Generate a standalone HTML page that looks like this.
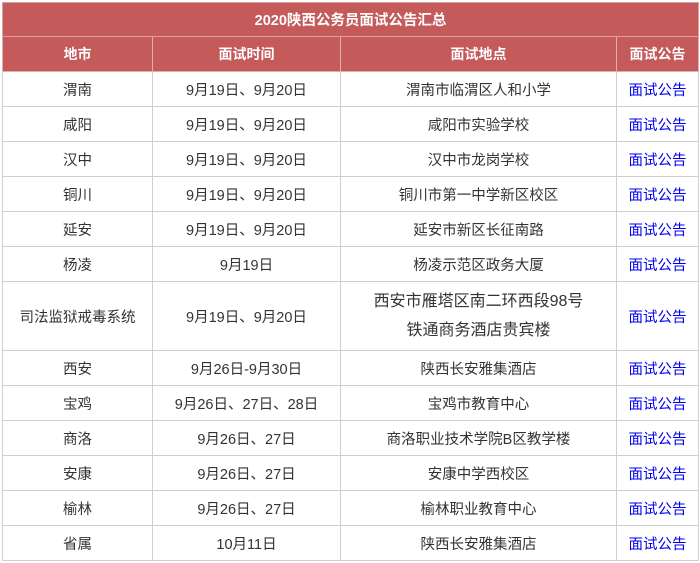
<!DOCTYPE html>
<html><head><meta charset="utf-8"><style>
body{margin:0;background:#fff;font-family:"Liberation Sans","Noto Sans CJK SC",sans-serif;}
table{position:absolute;left:2px;top:2px;border-collapse:collapse;width:696px;table-layout:fixed;}
td{border:1px solid #cfcfcf;text-align:center;font-size:14.5px;color:#333;height:34px;padding:0;}
tr.t td{background:#c45a5a;color:#fff;font-weight:bold;font-size:14.5px;border-color:#d9a0a0;height:33px;}
tr.h td{background:#c45a5a;color:#fff;font-weight:bold;font-size:14px;border-color:#e0b0b0;}
td a{color:#0000ee;text-decoration:none;}
tr.big td{height:68px;}
tr.big td.l{font-size:16px;line-height:29px;}
</style></head><body>
<table>
<colgroup><col style="width:150px"><col style="width:188px"><col style="width:276px"><col style="width:82px"></colgroup>
<tr class="t"><td colspan="4">2020陕西公务员面试公告汇总</td></tr>
<tr class="h"><td>地市</td><td>面试时间</td><td>面试地点</td><td>面试公告</td></tr>
<tr><td>渭南</td><td>9月19日、9月20日</td><td>渭南市临渭区人和小学</td><td><a>面试公告</a></td></tr>
<tr><td>咸阳</td><td>9月19日、9月20日</td><td>咸阳市实验学校</td><td><a>面试公告</a></td></tr>
<tr><td>汉中</td><td>9月19日、9月20日</td><td>汉中市龙岗学校</td><td><a>面试公告</a></td></tr>
<tr><td>铜川</td><td>9月19日、9月20日</td><td>铜川市第一中学新区校区</td><td><a>面试公告</a></td></tr>
<tr><td>延安</td><td>9月19日、9月20日</td><td>延安市新区长征南路</td><td><a>面试公告</a></td></tr>
<tr><td>杨凌</td><td>9月19日</td><td>杨凌示范区政务大厦</td><td><a>面试公告</a></td></tr>
<tr class="big"><td>司法监狱戒毒系统</td><td>9月19日、9月20日</td><td class="l">西安市雁塔区南二环西段98号<br>铁通商务酒店贵宾楼</td><td><a>面试公告</a></td></tr>
<tr><td>西安</td><td>9月26日-9月30日</td><td>陕西长安雅集酒店</td><td><a>面试公告</a></td></tr>
<tr><td>宝鸡</td><td>9月26日、27日、28日</td><td>宝鸡市教育中心</td><td><a>面试公告</a></td></tr>
<tr><td>商洛</td><td>9月26日、27日</td><td>商洛职业技术学院B区教学楼</td><td><a>面试公告</a></td></tr>
<tr><td>安康</td><td>9月26日、27日</td><td>安康中学西校区</td><td><a>面试公告</a></td></tr>
<tr><td>榆林</td><td>9月26日、27日</td><td>榆林职业教育中心</td><td><a>面试公告</a></td></tr>
<tr><td>省属</td><td>10月11日</td><td>陕西长安雅集酒店</td><td><a>面试公告</a></td></tr>
</table>
</body></html>
